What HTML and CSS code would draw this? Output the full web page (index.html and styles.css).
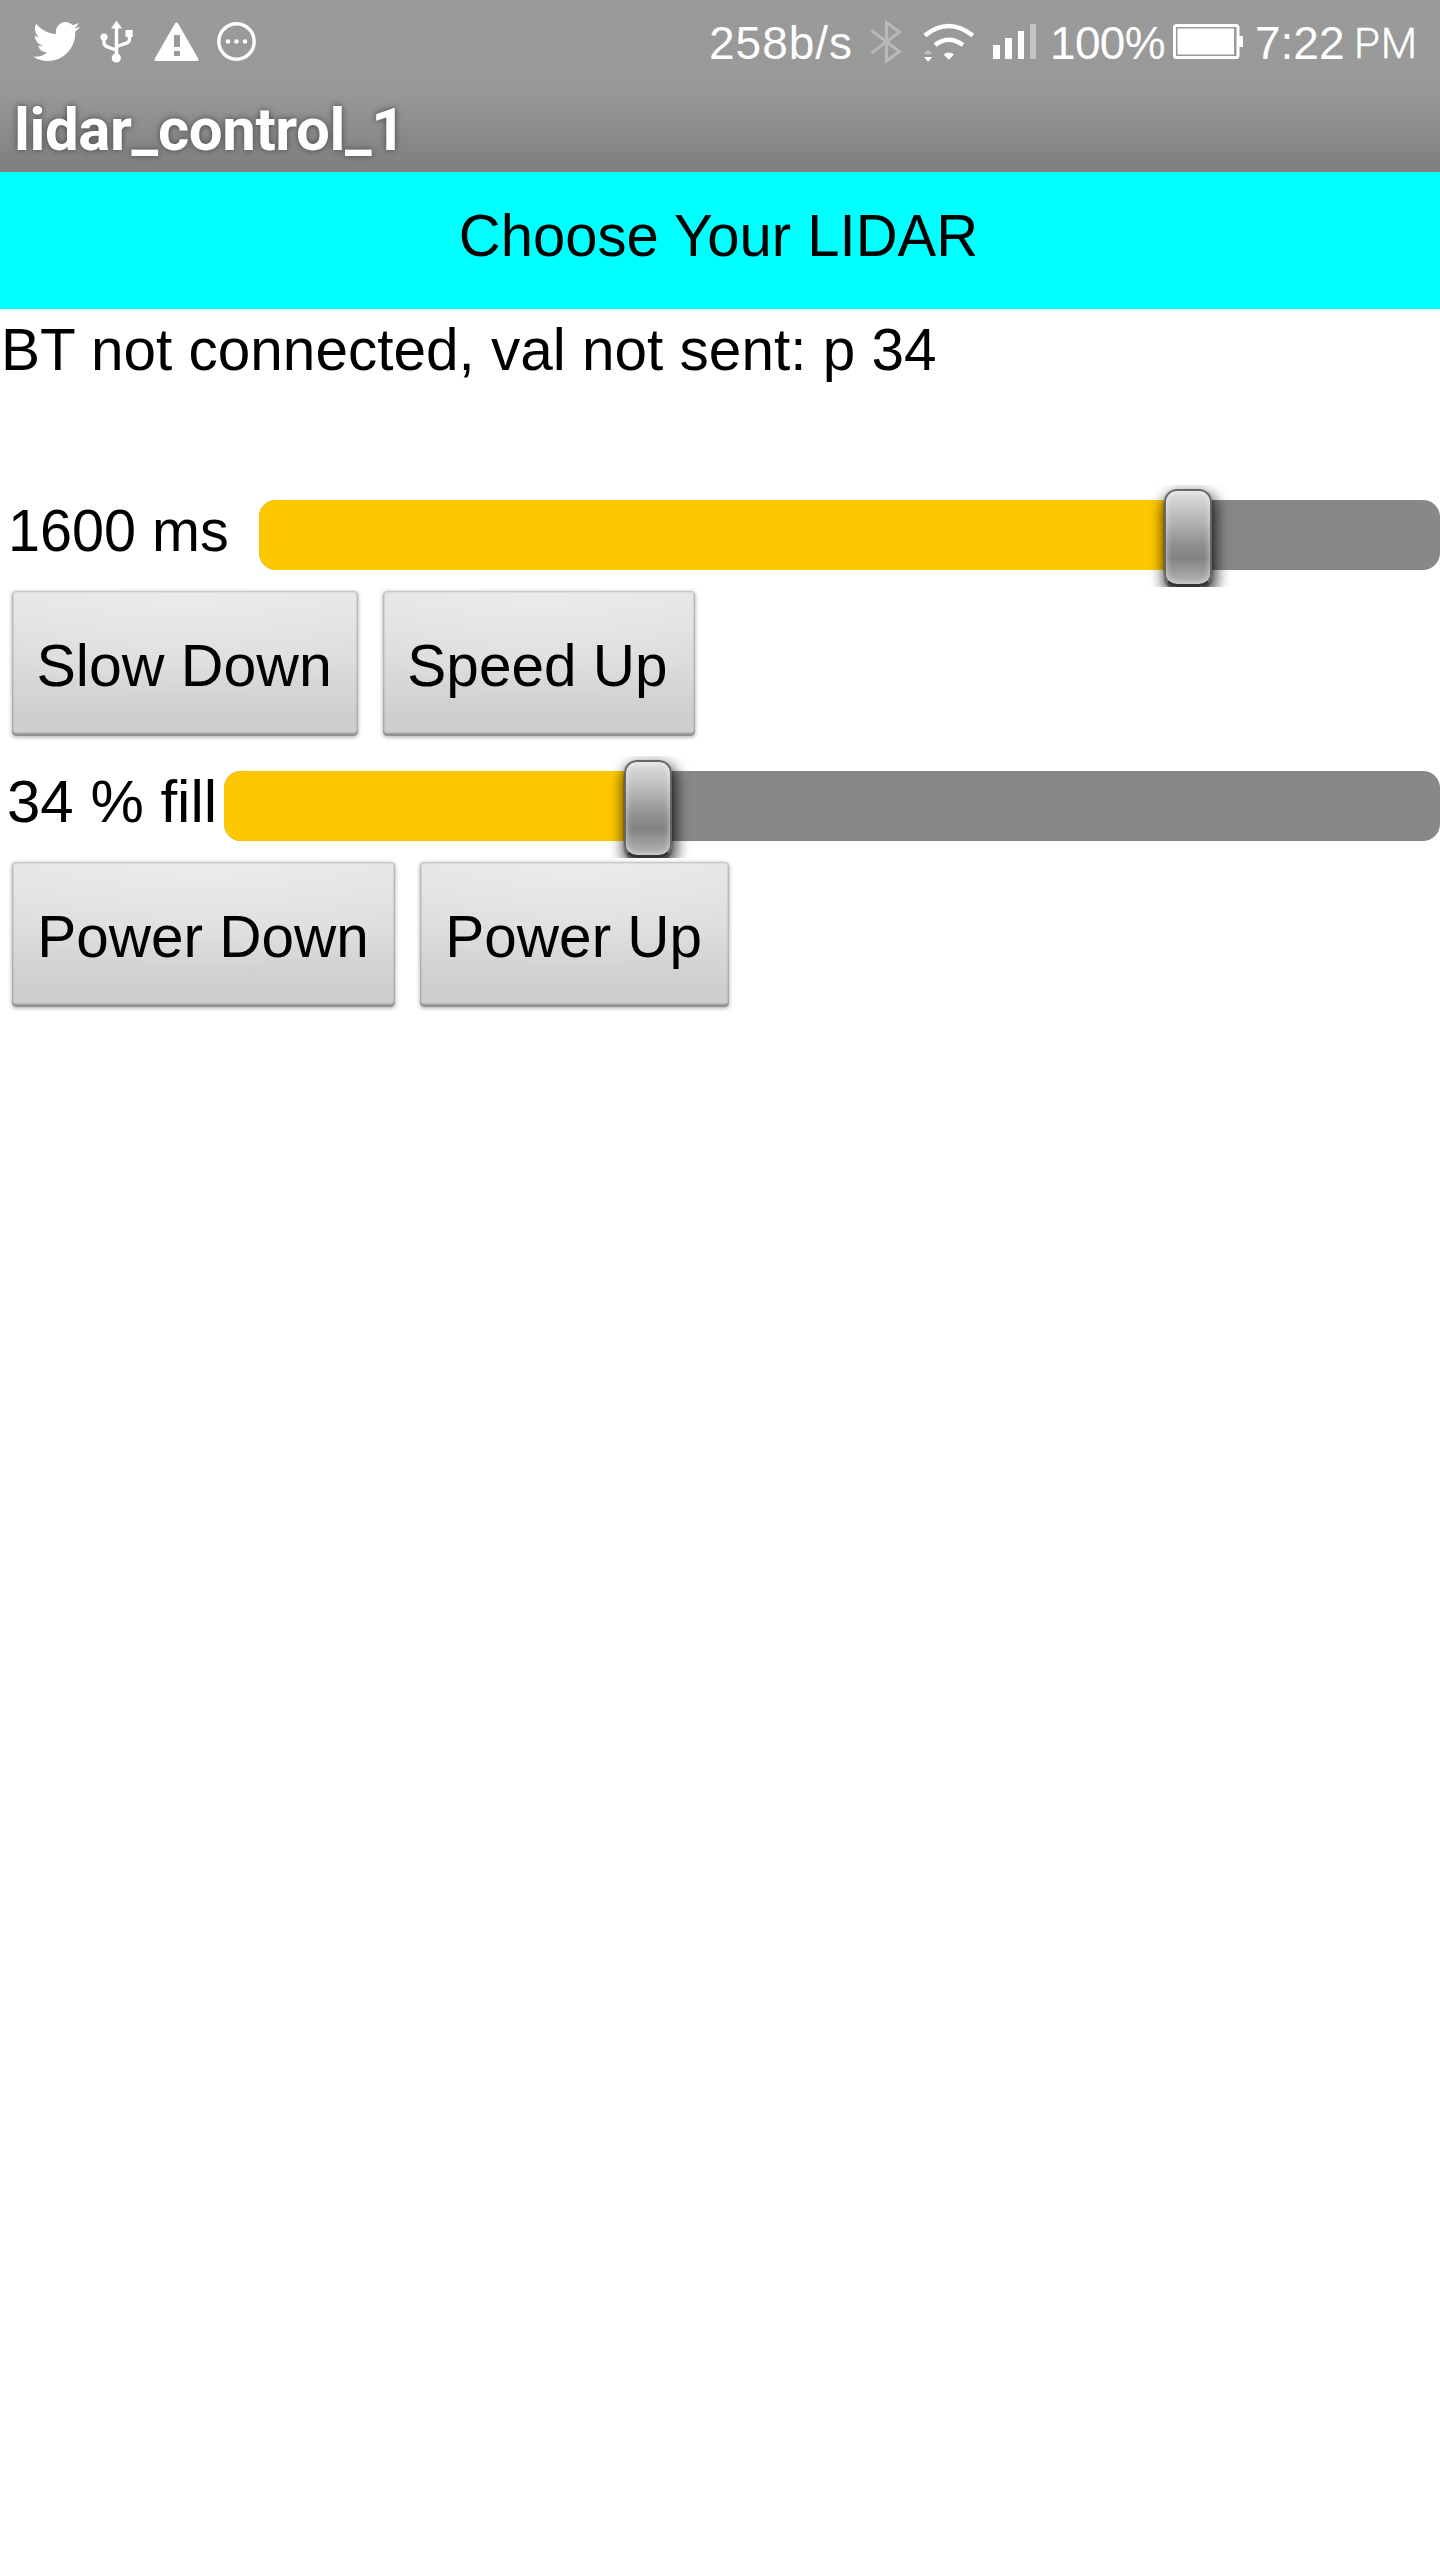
FILE: index.html
```html
<!DOCTYPE html>
<html lang="en">
<head>
<meta charset="utf-8">
<title>lidar_control_1</title>
<link rel="stylesheet" href="styles.css">
</head>
<body>
<header class="header">
  <div class="status">
    <div class="status-left">
      <svg width="47" height="84" viewBox="33 0 47 84" fill="#fff"><path transform="translate(33 17.5) scale(1.96 2)" d="M23.953 4.57a10 10 0 01-2.825.775 4.958 4.958 0 002.163-2.723c-.951.555-2.005.959-3.127 1.184a4.92 4.92 0 00-8.384 4.482C7.69 8.095 4.067 6.13 1.64 3.162a4.822 4.822 0 00-.666 2.475c0 1.71.87 3.213 2.188 4.096a4.904 4.904 0 01-2.228-.616v.06a4.923 4.923 0 003.946 4.827 4.996 4.996 0 01-2.212.085 4.936 4.936 0 004.604 3.417 9.867 9.867 0 01-6.102 2.105c-.39 0-.779-.023-1.17-.067a13.995 13.995 0 007.557 2.209c9.053 0 13.998-7.496 13.998-13.985 0-.21 0-.42-.015-.63A9.935 9.935 0 0024 4.59z"/></svg>
      <svg width="34" height="84" viewBox="100 0 34 84" fill="#fff"><path d="M116.500 20.500l5.500 8h-11z"/><path d="M116.500 27v29M104 38v4.500q0 3 3 4.200l6 2.300 3.500 1M129.500 35v4q0 3-3 4.200l-7 2.300-3 1.300" fill="none" stroke="#fff" stroke-width="3.400"/><circle cx="104" cy="37" r="3.600"/><rect x="125.500" y="30" width="7.200" height="7"/><circle cx="116.300" cy="58" r="4.600"/></svg>
      <svg width="45" height="84" viewBox="154 0 45 84" fill="#fff"><path fill-rule="evenodd" d="M174.800 23.700q1.700-2.400 3.400 0l20 34.800q.8 2.500-1.200 2.500h-41q-2 0-1.200-2.500zM174 35v12h6V35zM174 51v5h6v-5z"/></svg>
      <svg width="40" height="84" viewBox="217 0 40 84" fill="#fff"><circle cx="236.500" cy="41.500" r="17.700" fill="none" stroke="#fff" stroke-width="3.400"/><circle cx="228" cy="41.500" r="2.200"/><circle cx="236.500" cy="41.500" r="2.200"/><circle cx="245" cy="41.500" r="2.200"/></svg>
    </div>
    <div class="status-right">
      <span class="stat speed">258b/s</span>
      <svg class="bluetooth" width="32" height="84" viewBox="870 0 32 84" fill="none" stroke="#b8b8b8" stroke-width="3"><path d="M871.500 30.500L899.500 51.500 886.500 61V22.500L899.500 32 871.500 53"/></svg>
      <svg class="wifi" width="52" height="84" viewBox="923 0 52 84"><path d="M924.800 35.500Q948.700 16.500 972.800 35.500M935 45Q948.700 34.500 963 45" fill="none" stroke="#fff" stroke-width="4.600"/><path d="M943.500 54.500q5.300-4 10.500 0l-5.200 5.200z" fill="#fff"/><path d="M924 54l4-4.500 4 4.500z" fill="#c4c4c4"/><path d="M924 57h8.300l-4.200 4.800z" fill="#fff"/></svg>
      <svg class="signal" width="44" height="84" viewBox="993 0 44 84" fill="#fff"><path d="M993 45h7v14h-7zM1005 38h7v21h-7zM1018 31h6v28h-6z"/><path d="M1030 24h6v35h-6z" fill="#c4c4c4"/></svg>
      <span class="stat percent">100%</span>
      <svg class="battery" width="71" height="84" viewBox="1173 0 71 84"><rect x="1174.500" y="25.500" width="63.500" height="32" rx="2" fill="none" stroke="#fff" stroke-width="3"/><path d="M1177.500 28.500h56.500v26h-56.500zM1239 36h4v11h-4z" fill="#fff"/></svg>
      <span class="stat time">7:22</span>
      <span class="stat period">PM</span>
    </div>
  </div>
  <h1 class="title">lidar_control_1</h1>
</header>
<main>
  <div class="picker"><span class="picker-text">Choose Your LIDAR</span></div>
  <p class="message"><span class="message-text">BT not connected, val not sent: p 34</span></p>
  <section class="control">
    <div class="slider-row">
      <div class="value value-period"><span>1600 ms</span></div>
      <div class="track"><div class="fill" style="width:78.66%"><i class="thumb"></i></div></div>
    </div>
    <div class="buttons">
      <button class="btn btn-slow"><span>Slow Down</span></button>
      <button class="btn btn-fast"><span>Speed Up</span></button>
    </div>
  </section>
  <section class="control">
    <div class="slider-row">
      <div class="value value-power"><span>34 % fill</span></div>
      <div class="track"><div class="fill" style="width:34.87%"><i class="thumb"></i></div></div>
    </div>
    <div class="buttons">
      <button class="btn btn-down"><span>Power Down</span></button>
      <button class="btn btn-up"><span>Power Up</span></button>
    </div>
  </section>
</main>
</body>
</html>
```
FILE: styles.css
```css
* { box-sizing: border-box; }

body {
  margin: 0;
  min-height: 2560px;
  background: #fff;
  color: #000;
  font: 60px/68px "Liberation Sans", Arial, sans-serif;
}

.header {
  height: 172px;
  color: #fff;
  background: linear-gradient(#9a9a9a, #999 84px, #939493 105px, #7f7f7f 170px, #827d79);
}

.status {
  display: flex;
  justify-content: space-between;
  height: 84px;
  padding: 0 0 0 33px;
}

.status-left { display: flex; }
.status-left svg { margin-right: 20px; flex: none; }
.status-left svg:nth-child(3) { margin-right: 18px; }

.status-right { display: flex; width: 731px; }
.status-right svg { flex: none; }

.stat {
  flex: none;
  height: 84px;
  font-size: 46px;
  line-height: 86px;
  white-space: nowrap;
}

.speed { width: 161px; letter-spacing: 1px; }
.wifi { margin-left: 21px; }
.signal { margin-left: 18px; }
.percent { width: 123px; margin-left: 13px; letter-spacing: -.7px; }
.time { width: 99px; margin-left: 11px; }
.period { font: 300 42px/88px Roboto, sans-serif; letter-spacing: 1px; -webkit-text-stroke: .5px #fff; }

.title {
  margin: 0;
  padding: 2px 0 0 14px;
  font: bold 60px/88px Roboto, sans-serif;
  letter-spacing: -.4px;
  text-shadow: 0 0 6px #444;
}

.picker {
  display: flex;
  justify-content: center;
  height: 137px;
  padding: 30px 2px 0 0;
  background: #0ff;
}

.picker-text { transform: scaleX(.967); }

.message {
  height: 165px;
  margin: 0;
  padding: 7px 0 0 1px;
}

.message-text,
.value span,
.btn span {
  display: inline-block;
  white-space: nowrap;
  transform: scaleX(.975);
}

.message-text,
.value span { transform-origin: 0 50%; }

.control { height: 271px; padding-top: 26px; }

.slider-row { display: flex; height: 70px; }

.value { flex: none; height: 70px; }
.value-period { width: 259px; padding-left: 8px; }
.value-period span { transform: scaleX(.959); }
.value-power { width: 224px; padding-left: 7px; }
.value-power span { transform: none; }
.value span { display: block; margin-top: -3px; }

.track {
  flex: 1;
  height: 70px;
  border-radius: 17px;
  background: #888;
}

.fill {
  position: relative;
  height: 70px;
  border-radius: 17px 0 0 17px;
  background: #fec800;
}

.thumb {
  position: absolute;
  right: -24px;
  top: -11px;
  width: 48px;
  height: 98px;
  border: 2px solid #666;
  border-bottom: 3px solid #333;
  border-radius: 13px;
  background: linear-gradient(#e0e0e0, #b8b8b8 30%, #8f8f8f 58%, #828282 72%, #b2b2b2 98%);
  box-shadow: inset 0 0 6px rgba(255, 255, 255, .65), 0 2px 2px rgba(0, 0, 0, .5), 2px 7px 14px 3px rgba(0, 0, 0, .7);
  clip-path: inset(-4px -24px 0 -24px);
}

.buttons { display: flex; padding: 21px 0 0 12px; }

.btn {
  height: 145px;
  padding: 4px 0 0;
  border: 0;
  border-radius: 4px;
  color: inherit;
  font: inherit;
  background: radial-gradient(ellipse 70% 75% at 50% 0, rgba(255, 255, 255, .25), transparent), linear-gradient(#e6e6e6, #dcdcdc 50%, #cdcdcd 88%, #d0d0d0 97%);
  box-shadow: inset 0 0 2px 1px rgba(150, 150, 150, .55), inset 0 -3px 2px rgba(110, 110, 110, .65), 0 1px 4px rgba(0, 0, 0, .35);
}

.btn-slow { width: 346px; margin-right: 25px; padding-right: 2px; }
.btn-fast { width: 312px; padding-right: 3px; }
.btn-down { width: 383px; margin-right: 25px; }
.btn-up { width: 309px; padding-right: 1px; }
.btn-slow span { transform: scaleX(.984); }
```
